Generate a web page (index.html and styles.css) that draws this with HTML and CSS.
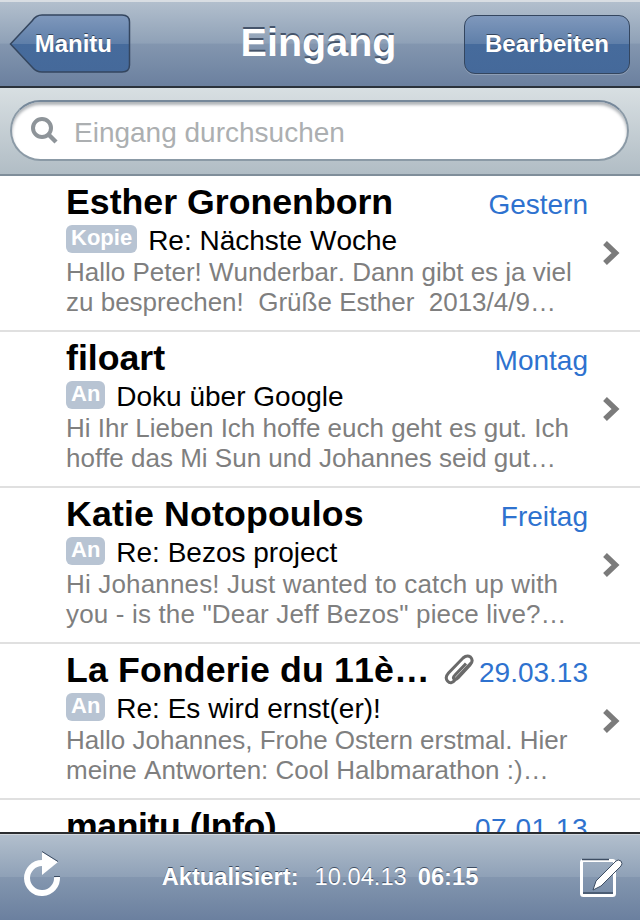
FILE: index.html
```html
<!DOCTYPE html>
<html lang="de">
<head>
<meta charset="utf-8">
<title>Eingang</title>
<link rel="stylesheet" href="styles.css">
</head>
<body>
<div class="app">
  <header class="nav">
    <a class="back">
      <svg class="back-shape" width="122" height="60" viewBox="0 0 122 60">
        <defs>
          <linearGradient id="bk" x1="0" y1="0" x2="0" y2="1">
            <stop offset="0" stop-color="#7f98bc"/>
            <stop offset=".5" stop-color="#5f7fa9"/>
            <stop offset=".51" stop-color="#466b9c"/>
            <stop offset="1" stop-color="#45699a"/>
          </linearGradient>
        </defs>
        <path d="M1.500 30 L23 7 Q27 1 33 1 H113 Q120.500 1 120.500 8 V51 Q120.500 58 113 58 H33 Q27 58 23 53 Z" fill="url(#bk)" stroke="#34465f" stroke-width="1.500"/>
      </svg>
      <span class="btn-label">Manitu</span>
    </a>
    <h1 class="title">Eingang</h1>
    <a class="edit"><span class="btn-label">Bearbeiten</span></a>
  </header>
  <div class="search">
    <div class="field">
      <svg class="lens" width="30" height="30" viewBox="0 0 30 30">
        <circle cx="12" cy="12" r="9" fill="none" stroke="#8e9499" stroke-width="4"/>
        <path d="M18 18 L26 26" stroke="#8e9499" stroke-width="4.500"/>
      </svg>
      <span class="placeholder">Eingang durchsuchen</span>
    </div>
  </div>
  <main class="list">
    <article class="row">
      <div class="body">
        <div class="top"><span class="name">Esther Gronenborn</span><span class="date">Gestern</span></div>
        <div class="subject"><span class="tag">Kopie</span><span>Re: Nächste Woche</span></div>
        <p class="preview">Hallo Peter! Wunderbar. Dann gibt es ja viel<br>zu besprechen!&nbsp; Grüße Esther&nbsp; 2013/4/9…</p>
      </div>
      <svg class="chev" width="20" height="26" viewBox="0 0 20 26"><path d="M2 3 L12.500 13 L2 23" fill="none" stroke="#7b7b7b" stroke-width="5.500"/></svg>
    </article>
    <article class="row">
      <div class="body">
        <div class="top"><span class="name">filoart</span><span class="date">Montag</span></div>
        <div class="subject"><span class="tag">An</span><span>Doku über Google</span></div>
        <p class="preview">Hi Ihr Lieben Ich hoffe euch geht es gut. Ich<br>hoffe das Mi Sun und Johannes seid gut…</p>
      </div>
      <svg class="chev" width="20" height="26" viewBox="0 0 20 26"><path d="M2 3 L12.500 13 L2 23" fill="none" stroke="#7b7b7b" stroke-width="5.500"/></svg>
    </article>
    <article class="row">
      <div class="body">
        <div class="top"><span class="name name-loose">Katie Notopoulos</span><span class="date">Freitag</span></div>
        <div class="subject"><span class="tag">An</span><span>Re: Bezos project</span></div>
        <p class="preview preview-loose">Hi Johannes! Just wanted to catch up with<br>you - is the "Dear Jeff Bezos" piece live?…</p>
      </div>
      <svg class="chev" width="20" height="26" viewBox="0 0 20 26"><path d="M2 3 L12.500 13 L2 23" fill="none" stroke="#7b7b7b" stroke-width="5.500"/></svg>
    </article>
    <article class="row">
      <div class="body">
        <div class="top"><span class="name name-loose">La Fonderie du 11è…</span>
          <svg class="clip" width="30" height="32" viewBox="0 0 30 32"><path d="M27 9 L11 26 Q7 31 3.500 27 Q0.500 23.500 4.500 19 L19 4 Q23 0.500 26.500 3 Q30 6.500 26 11 L14 24 Q11.500 26.500 10 25 Q8.500 23.500 11 21 L22 9.500" fill="none" stroke="#6a6a6a" stroke-width="3"/></svg>
          <span class="date">29.03.13</span></div>
        <div class="subject"><span class="tag">An</span><span>Re: Es wird ernst(er)!</span></div>
        <p class="preview">Hallo Johannes, Frohe Ostern erstmal. Hier<br>meine Antworten: Cool Halbmarathon :)…</p>
      </div>
      <svg class="chev" width="20" height="26" viewBox="0 0 20 26"><path d="M2 3 L12.500 13 L2 23" fill="none" stroke="#7b7b7b" stroke-width="5.500"/></svg>
    </article>
    <article class="row">
      <div class="body">
        <div class="top"><span class="name name-tight">manitu (Info)</span><span class="date date-wide">07.01.13</span></div>
      </div>
      <span class="chev-space"></span>
    </article>
  </main>
  <footer class="toolbar">
    <svg class="tool tool-refresh" width="40" height="46" viewBox="0 0 40 46">
      <path d="M21 12 A15 15 0 1 0 36 26" fill="none" stroke="#fff" stroke-width="6"/>
      <path d="M21 1 L37 11 L21 24 Z" fill="#fff"/>
      <path d="M21 0.500 L37 10.500" stroke="#3a4a60" stroke-width="1"/>
      <path d="M33 25.500 H39" stroke="#3a4a60" stroke-width="1"/>
    </svg>
    <div class="status"><b>Aktualisiert:</b><span class="when">10.04.13</span><b>06:15</b></div>
    <svg class="tool" width="44" height="40" viewBox="0 0 44 40">
      <rect x="2.500" y="2.500" width="33" height="35" rx="2" fill="none" stroke="#fff" stroke-width="3"/>
      <path d="M3 1.500 H30" stroke="#3d4d63" stroke-width="1.500"/>
      <path d="M4 35 H34" stroke="#3d4d63" stroke-width="1.500"/>
      <path d="M14 32 L17 23 L37 3 Q39 1 42 3 Q44 6 42 8 L22 28 Z" fill="#fff" stroke="#3d4d63" stroke-width="1"/>
    </svg>
  </footer>
</div>
</body>
</html>
```

FILE: styles.css
```css
* { box-sizing: border-box; }
html, body { margin: 0; padding: 0; }
body { width: 640px; height: 920px; overflow: hidden; font-family: "Liberation Sans", Arial, sans-serif; font-kerning: none; background: #fff; }
.app { width: 640px; height: 920px; display: flex; flex-direction: column; }

.nav {
  height: 88px; flex: none; display: flex; align-items: center; justify-content: space-between;
  padding: 0 10px 0 9px; position: relative;
  border-top: 2px solid #d9dee3; border-bottom: 2px solid #2b323b;
  background: linear-gradient(#b2bfcd 0, #8fa1b7 49%, #8396af 50%, #6b809f 100%);
}
.title { margin: 0 0 0 -3px; font-size: 39.500px; font-weight: bold; color: #fff; position: absolute; left: 0; right: 0; text-align: center; top: 17px; line-height: 46px; text-shadow: 0 -2px 0 #46556b; }
.back { width: 122px; height: 60px; position: relative; display: flex; align-items: center; justify-content: flex-end; padding-right: 19px; z-index: 1; }
.back-shape { position: absolute; left: 0; top: 0; }
.edit {
  width: 166px; height: 59px; display: flex; align-items: center; justify-content: center; z-index: 1;
  border: 1.500px solid #34465f; border-radius: 11px;
  background: linear-gradient(#7f98bc 0, #5f7fa9 49%, #466b9c 50%, #45699a 100%);
  box-shadow: 0 1px 0 rgba(255,255,255,.2);
}
.btn-label { position: relative; color: #fff; font-size: 24px; font-weight: bold; text-shadow: 0 -1px 0 #36465c; }

.search {
  height: 88px; flex: none; padding: 12px 11px 14px 10px;
  background: linear-gradient(#d8dfe2, #b1bdc5);
  border-bottom: 2px solid #7f8e9a;
}
.field {
  height: 61px; border-radius: 31px; background: #fff; display: flex; align-items: center; padding: 4px 18px 0 18px; gap: 14px;
  border: 2px solid #8b9aa6; border-top-color: #76889a;
  box-shadow: inset 0 3px 3px rgba(60,70,80,.4);
}
.lens { flex: none; margin-top: -3px; }
.placeholder { font-size: 28px; color: #acafb1; }

.list { flex: 1; min-height: 0; overflow: hidden; border-bottom: 2px solid #2b2d30; }
.row { height: 156px; border-bottom: 2px solid #e0e0e0; display: flex; align-items: center; padding: 0 17px 0 66px; gap: 15px; }
.row:last-child { align-items: flex-start; border-bottom: 0; }
.body { flex: 1; min-width: 0; align-self: flex-start; padding-top: 6px; }
.top { display: flex; align-items: center; height: 40px; }
.name { font-size: 35.700px; font-weight: bold; color: #000; white-space: nowrap; }
.name-loose { letter-spacing: .15px; }
.name-tight { letter-spacing: -.45px; }
.clip { flex: none; margin-left: 14px; margin-right: 4px; }
.date { margin-left: auto; font-size: 28px; color: #2e72cf; padding-top: 6px; white-space: nowrap; }
.date-wide { letter-spacing: .5px; }
.subject { display: flex; align-items: center; height: 36px; margin-top: 1px; font-size: 28px; color: #000; gap: 11px; white-space: nowrap; }
.tag { background: #b8c4d3; color: #fff; font-size: 22px; font-weight: bold; padding: 0 5px; height: 28px; line-height: 26px; border-radius: 6px; margin-top: -5px; }
.preview { margin: -2px 0 0; font-size: 26px; line-height: 30px; color: #7f7f7f; white-space: nowrap; }
.preview-loose { letter-spacing: .16px; }
.chev { flex: none; margin-left: auto; }
.chev-space { flex: none; width: 20px; }

.toolbar {
  height: 86px; flex: none; display: flex; align-items: center; justify-content: space-between; padding: 0 17px 0 21px;
  border-top: 1px solid #d0d6dc;
  background: linear-gradient(#b2bfcd 0, #8fa1b7 49%, #8396af 50%, #6b809f 100%);
}
.tool-refresh { margin-bottom: 7px; }
.status { color: #fff; font-size: 23.700px; display: flex; gap: 11px; text-shadow: 0 -1px 0 #3f4e63; }
.when { font-weight: normal; margin-left: 5px; }
```
